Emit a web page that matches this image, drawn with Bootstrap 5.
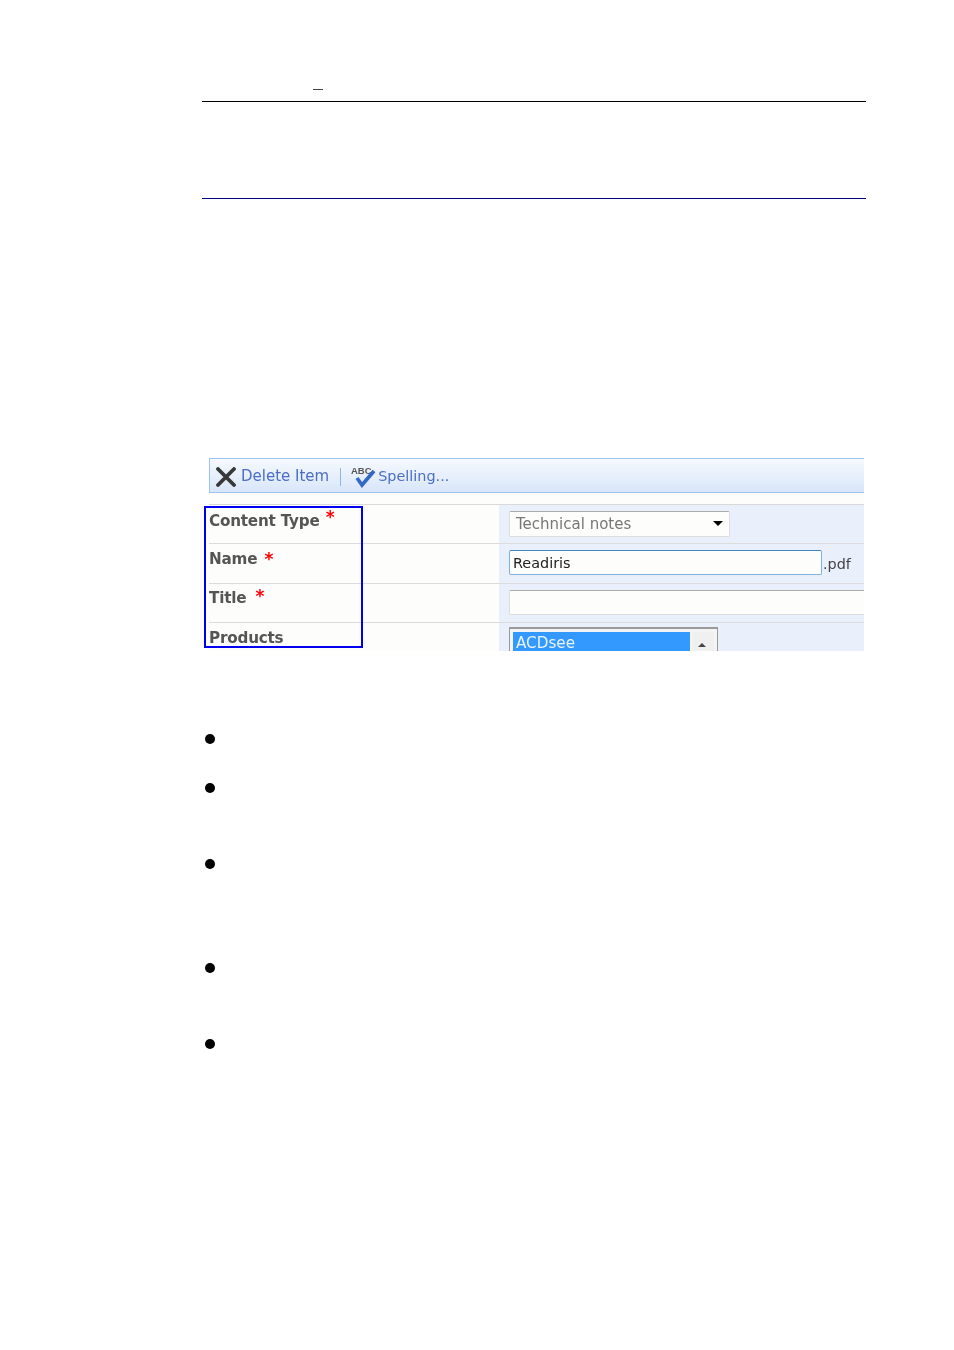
<!DOCTYPE html>
<html lang="en">
<head>
<meta charset="utf-8">
<title>Document page</title>
<link href="https://cdn.jsdelivr.net/npm/bootstrap@5.3.0/dist/css/bootstrap.min.css" rel="stylesheet">
<style>
html,body{background:#fff;margin:0;padding:0}
body{font-family:"DejaVu Sans",sans-serif;height:1350px;overflow:hidden}
.sheet{margin-left:202px;width:664px;padding-top:89px}
.head-mark{display:block;width:10px;height:1px;background:#444;margin-left:111px}
.rule-black{height:1px;background:#000;margin-top:11px}
.rule-navy{height:1px;background:#000080;margin-top:96px}
.shot-wrap{position:relative;margin-top:259px}
.shot{margin-left:7px;width:655px;height:193px;overflow:hidden;background:#fdfefc;filter:blur(.35px)}
.frame{position:absolute;left:2px;top:48px;width:159px;height:142px;border:2px solid #0000f0;z-index:2}
.toolbar{height:35px;border:1px solid #9cc3ee;border-right:0;background:linear-gradient(#f6f9fe,#d8e6f9);color:#4b6fc4;font-size:15px;padding-left:6px;padding-top:2px;gap:4px}
.tool-first{margin-left:1px}
.tool-sep{width:1px;height:18px;background:#8fb4e6;margin:0 6px 0 7px}
.tool-label{font-size:14.4px;margin-left:-3px}
.form-rows{margin-top:11px;border-top:1px solid #d9d9d9}
.frow{display:flex;border-bottom:1px solid #dcdcdc}
.frow:last-child{border-bottom:0}
.r1{height:39px}.r2{height:40px}.r3{height:39px}.r4{height:29px}
.lab{width:290px;font-weight:700;color:#555;font-size:15.2px;letter-spacing:-.2px;line-height:18px;padding-top:7px;white-space:nowrap}
.r2 .lab{padding-top:6px}
.r3 .lab{padding-top:5px}
.r4 .lab{padding-top:6px}
.star{color:#f00;font-weight:700;font-size:17px;line-height:1;display:inline-block}
.star-a{margin-left:1px;position:relative;top:-3px}
.star-b{margin-left:2px;position:relative;top:1px}
.star-c{margin-left:4px;position:relative;top:-1px}
.val{flex:1;background:#e9f0fb;padding-left:10px;font-size:15px;min-width:0}
.sel{width:221px;height:26px;margin-top:6px;background:#fdfefc;border:1px solid #ddd;border-top-color:#aaa;border-radius:2px;color:#777;padding:0 6px;line-height:25px}
.caret-down{width:0;height:0;border-left:5px solid transparent;border-right:5px solid transparent;border-top:5px solid #000;margin-top:-2px}
.inp{width:313px;height:25px;margin-top:6px;background:#fdfefc;border:1px solid #7fb2dc;border-top-color:#3f86c4;border-radius:2px;color:#222;padding-left:3px;line-height:24px;font-size:14.4px}
.ext{color:#444;margin-left:1px;line-height:24px;margin-top:8px;font-size:14.4px}
.inp-empty{width:100%;height:25px;margin-top:6px;background:#fdfefc;border:1px solid #ddd;border-top-color:#aaa;border-right:0;border-radius:2px 0 0 2px}
.listb{width:209px;height:40px;margin-top:4px;background:#f4f4f4;border:1px solid #999;border-top-width:2px;border-bottom:0;padding:3px 3px 0 3px;display:flex}
.opt{width:177px;background:#3399ff;color:#eaf4ff;padding-left:3px;line-height:23px;height:30px;font-size:15.2px}
.sbar{flex:1;background:#f0f0f0;margin-left:2px;position:relative}
.sbar::after{content:"";position:absolute;left:6px;top:11px;width:0;height:0;border-left:4px solid transparent;border-right:4px solid transparent;border-bottom:4px solid #444}
.dots{margin-top:83px;padding-left:3px}
.dot{display:block;width:10px;height:10px;border-radius:50%;background:#000}
.d2{margin-top:39px}.d3{margin-top:66px}.d4{margin-top:94px}.d5{margin-top:66px}
</style>
</head>
<body>
<main class="sheet">
  <span class="head-mark"></span>
  <div class="rule-black"></div>
  <div class="rule-navy"></div>
  <div class="shot-wrap">
    <div class="shot">
      <div class="toolbar d-flex align-items-center">
        <svg width="20" height="20" viewBox="0 0 20 20" aria-hidden="true"><path d="M2 2 L18 18 M18 2 L2 18" stroke="#383838" stroke-width="3.8" stroke-linecap="round" fill="none"/></svg>
        <span class="tool-first">Delete Item</span>
        <span class="tool-sep"></span>
        <svg width="26" height="24" viewBox="0 0 26 24" aria-hidden="true"><text x="0" y="9" font-size="9.5" font-weight="700" font-family="Liberation Sans" fill="#555">ABC</text><path d="M6 13 L11 20 L23 6" stroke="#3468c8" stroke-width="3.6" fill="none"/></svg>
        <span class="tool-label">Spelling...</span>
      </div>
      <div class="form-rows">
        <div class="frow r1">
          <div class="lab">Content Type <span class="star star-a">*</span></div>
          <div class="val"><div class="sel d-flex align-items-center justify-content-between"><span>Technical notes</span><span class="caret-down"></span></div></div>
        </div>
        <div class="frow r2">
          <div class="lab">Name <span class="star star-b">*</span></div>
          <div class="val d-flex"><div class="inp">Readiris</div><span class="ext">.pdf</span></div>
        </div>
        <div class="frow r3">
          <div class="lab">Title <span class="star star-c">*</span></div>
          <div class="val"><div class="inp-empty"></div></div>
        </div>
        <div class="frow r4">
          <div class="lab">Products</div>
          <div class="val"><div class="listb"><div class="opt">ACDsee</div><div class="sbar"></div></div></div>
        </div>
      </div>
    </div>
    <div class="frame"></div>
  </div>
  <div class="dots">
    <span class="dot"></span>
    <span class="dot d2"></span>
    <span class="dot d3"></span>
    <span class="dot d4"></span>
    <span class="dot d5"></span>
  </div>
</main>
<script src="https://cdn.jsdelivr.net/npm/bootstrap@5.3.0/dist/js/bootstrap.bundle.min.js"></script>
</body>
</html>
